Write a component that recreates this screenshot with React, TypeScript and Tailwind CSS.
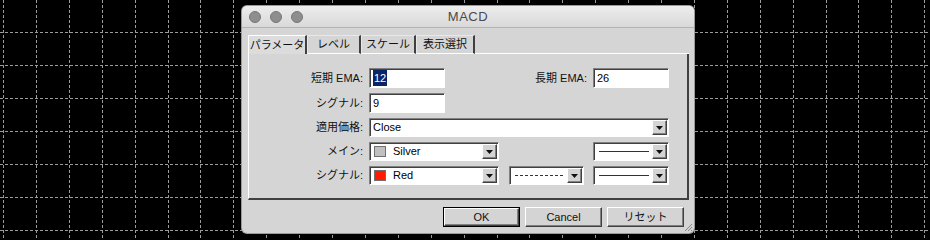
import React from 'react';

const jp = { fontFamily: '"Liberation Sans", "Noto Sans CJK JP", sans-serif' };

const sunken =
  'border border-t-[#808080] border-l-[#808080] border-r-white border-b-white shadow-[inset_1px_1px_0_#404040] bg-white';
const raised =
  'border border-t-white border-l-white border-r-[#404040] border-b-[#404040] shadow-[inset_-1px_-1px_0_#808080] bg-[#d4d4d4]';

const ChartGrid: React.FC = () => {
  const xs = Array.from({ length: 29 }, (_, i) => Math.round(3 + i * 32.9) + 0.5);
  const ys = Array.from({ length: 7 }, (_, i) => 32 + i * 33 + 0.5);
  return (
    <svg className="absolute inset-0" width={930} height={240}>
      {xs.map(x => (
        <line key={'v' + x} x1={x} y1={0} x2={x} y2={240} stroke="#9c9c9c" strokeWidth={1} strokeDasharray="3 2" />
      ))}
      {ys.map(y => (
        <line key={'h' + y} x1={0} y1={y} x2={930} y2={y} stroke="#9c9c9c" strokeWidth={1} strokeDasharray="3 2" />
      ))}
    </svg>
  );
};

const Arrow: React.FC = () => (
  <div className={`w-[15px] h-full flex items-center justify-center ${raised}`}>
    <svg width="7" height="4" viewBox="0 0 7 4">
      <path d="M0 0h7L3.5 4z" fill="#111" />
    </svg>
  </div>
);

const Input: React.FC<{ children: React.ReactNode }> = ({ children }) => (
  <div className={`w-[76px] h-[20px] flex items-center pl-[3px] text-[11px] text-black ${sunken}`}>{children}</div>
);

const Select: React.FC<{ w: string; children?: React.ReactNode }> = ({ w, children }) => (
  <div className={`${w} h-[19px] flex items-stretch pl-[3px] pr-[1px] py-[1px] ${sunken}`}>
    <div className="flex-1 flex items-center text-[11px] text-black overflow-hidden">{children}</div>
    <Arrow />
  </div>
);

const Label: React.FC<{ w: string; children: React.ReactNode }> = ({ w, children }) => (
  <div className={`${w} text-right text-[11px] text-[#111] pr-[6px] leading-none`}>{children}</div>
);

const Swatch: React.FC<{ color: string }> = ({ color }) => (
  <div className={`w-[12px] h-[11px] border border-[#707070] mr-[7px] ml-[1px] ${color}`}></div>
);

const LineSample: React.FC<{ dashed?: boolean }> = ({ dashed }) => (
  <svg width="50" height="3" className="ml-[2px]">
    <line x1="0" y1="1.5" x2="50" y2="1.5" stroke="#333" strokeWidth={1} strokeDasharray={dashed ? '3 2' : undefined} />
  </svg>
);

const Button: React.FC<{ label: string; primary?: boolean; w: string }> = ({ label, primary, w }) => (
  <div className={`${w} h-[20px] ${primary ? 'border border-black' : ''}`}>
    <div className={`w-full h-full flex items-center justify-center text-[11px] text-[#111] ${raised}`}>{label}</div>
  </div>
);

const tabs = ['パラメータ', 'レベル', 'スケール', '表示選択'];
const tabWidths = ['w-[59px]', 'w-[54px]', 'w-[55px]', 'w-[59px]'];

export default function App() {
  return (
    <div className="relative w-[930px] h-[240px] bg-black overflow-hidden" style={jp}>
      <ChartGrid />
      <div className="relative ml-[242px] mt-[6px] w-[452px] h-[227px] rounded-[5px] bg-[#d5d5d5] shadow-[0_0_0_1px_#9a9a9a] flex flex-col">
        <div className="h-[22px] grid grid-cols-[1fr_auto_1fr] items-center rounded-t-[5px] bg-gradient-to-b from-[#ededed] to-[#d9d9d9] border-b border-[#b3b3b3]">
          <div className="flex gap-[9px] pl-[7px]">
            <div className="w-[12px] h-[12px] rounded-full bg-[#8e8e8e] border border-[#777]"></div>
            <div className="w-[12px] h-[12px] rounded-full bg-[#8e8e8e] border border-[#777]"></div>
            <div className="w-[12px] h-[12px] rounded-full bg-[#8e8e8e] border border-[#777]"></div>
          </div>
          <div className="text-[13px] text-[#4a4a4a] tracking-[0.5px]">MACD</div>
          <div></div>
        </div>

        <div className="mt-[7px] ml-[6px] flex h-[19px] items-stretch">
          {tabs.map((t, i) => (
            <div
              key={t}
              className={`${tabWidths[i]} flex items-center justify-center text-[11px] text-[#111] border-r-2 border-r-[#404040] ${
                i === 0
                  ? 'bg-[#dcdcdc] border-t border-l border-t-white border-l-white'
                  : 'border-t border-l border-t-[#e8e8e8] border-l-[#e8e8e8] border-b border-b-white'
              }`}
            >
              {t}
            </div>
          ))}
          <div className="flex-1 border-b border-b-white mr-[5px]"></div>
        </div>

        <div className="ml-[6px] w-[441px] h-[146px] border-l border-l-white border-r-2 border-r-[#404040] border-b-2 border-b-[#404040] bg-[#d5d5d5] pt-[14px] flex flex-col gap-[5px]">
          <div className="flex items-center">
            <Label w="w-[120px]">短期 EMA:</Label>
            <Input>
              <span className="bg-[#0a246a] text-white px-[1px]">12</span>
            </Input>
            <Label w="w-[148px]">長期 EMA:</Label>
            <Input>26</Input>
          </div>
          <div className="flex items-center">
            <Label w="w-[120px]">シグナル:</Label>
            <Input>9</Input>
          </div>
          <div className="flex items-center">
            <Label w="w-[120px]">適用価格:</Label>
            <Select w="w-[300px]">Close</Select>
          </div>
          <div className="flex items-center">
            <Label w="w-[120px]">メイン:</Label>
            <div className="w-[300px] flex justify-between">
              <Select w="w-[130px]">
                <Swatch color="bg-[#c0c0c0]" />
                Silver
              </Select>
              <Select w="w-[76px]">
                <LineSample />
              </Select>
            </div>
          </div>
          <div className="flex items-center">
            <Label w="w-[120px]">シグナル:</Label>
            <div className="w-[300px] flex">
              <Select w="w-[130px]">
                <Swatch color="bg-[#ff1a00]" />
                Red
              </Select>
              <div className="ml-[10px]">
                <Select w="w-[75px]">
                  <LineSample dashed />
                </Select>
              </div>
              <div className="ml-[9px]">
                <Select w="w-[76px]">
                  <LineSample />
                </Select>
              </div>
            </div>
          </div>
        </div>

        <div className="mt-[7px] flex justify-end gap-[5px] pr-[10px]">
          <Button label="OK" primary w="w-[77px]" />
          <Button label="Cancel" w="w-[77px]" />
          <Button label="リセット" w="w-[77px]" />
        </div>

        <svg className="absolute right-[1px] bottom-[1px]" width="9" height="9" viewBox="0 0 9 9">
          <path d="M8 1L1 8M8 4L4 8M8 7L7 8" stroke="#888" strokeWidth={1} />
        </svg>
      </div>
    </div>
  );
}
